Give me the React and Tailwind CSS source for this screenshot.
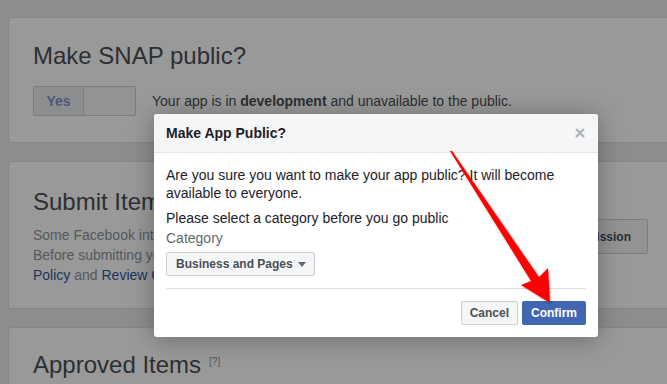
import React from 'react';

const Card = ({ className = '', children }) => (
  <div className={`bg-white border border-[#dddfe2] rounded-[3px] px-6 ${className}`}>{children}</div>
);

const BackgroundPage = () => (
  <div className="w-[673px] pl-2 pt-[17px] flex flex-col gap-[18px]">
    {/* Make public */}
    <Card className="pt-6 pb-[26px]">
      <h1 className="text-[24px] leading-[28px] text-[#4b4f56]">Make SNAP public?</h1>
      <div className="mt-4 flex items-center gap-4">
        <div className="flex h-[30px] border border-[#ccd0d5] rounded-[2px] overflow-hidden">
          <div className="w-[50px] bg-[#ebedf0] border-r border-[#ccd0d5] flex items-center justify-center text-[14px] font-bold text-[#7f95c9]">
            Yes
          </div>
          <div className="w-[51px] bg-[#f5f6f7]" />
        </div>
        <p className="text-[14px] text-[#4b4f56]">
          Your app is in <span className="font-bold">development</span> and unavailable to the public.
        </p>
      </div>
    </Card>

    {/* Submit items */}
    <Card className="pt-[26px] pb-[23px]">
      <div className="flex items-center justify-between">
        <div>
          <h2 className="text-[24px] leading-[28px] text-[#4b4f56]">Submit Items for Approval</h2>
          <div className="mt-[9px] text-[14px] leading-[20px] text-[#90949c]">
            <div>Some Facebook integrations require approval before public usage.</div>
            <div>Before submitting your app for review, please consult our Platform</div>
            <div>
              <span className="text-[#365899]">Policy</span> and{' '}
              <span className="text-[#365899]">Review Guidelines</span>.
            </div>
          </div>
        </div>
        <button className="shrink-0 h-[35px] px-4 bg-[#f5f6f7] border border-[#ccd0d5] rounded-[2px] text-[12px] font-bold text-[#4b4f56]">
          Start a Submission
        </button>
      </div>
    </Card>

    {/* Approved items */}
    <Card className="pt-[23px] h-[120px]">
      <h2 className="text-[24px] leading-[28px] text-[#4b4f56] flex items-start">
        Approved Items
        <span className="ml-2 mt-[5px] text-[10px] leading-[12px] text-[#90949c]">[?]</span>
      </h2>
    </Card>
  </div>
);

const Modal = () => (
  <div className="absolute left-[154px] top-[114px] w-[444px] bg-white rounded-[3px] shadow-[0_2px_26px_rgba(0,0,0,0.3)] overflow-hidden">
    <div className="h-[39px] px-3 bg-[#f5f6f7] border-b border-[#e5e5e5] flex items-center justify-between">
      <span className="text-[14px] font-bold text-[#1d2129]">Make App Public?</span>
      <svg width="10" height="10" viewBox="0 0 10 10" className="mr-[1px]">
        <path d="M1 1L9 9M9 1L1 9" stroke="#b0b3b8" strokeWidth="2.4" />
      </svg>
    </div>
    <div className="px-3 pt-[13px] pb-3">
      <p className="text-[14px] leading-[18px] text-[#1d2129]">
        Are you sure you want to make your app public? It will become available to everyone.
      </p>
      <p className="mt-[7px] text-[14px] leading-[18px] text-[#1d2129]">
        Please select a category before you go public
      </p>
      <div className="mt-[2px] text-[14px] leading-[18px] text-[#606770]">Category</div>
      <button className="mt-[5px] h-[24px] pl-[9px] pr-[8px] flex items-center gap-[5px] bg-[#f5f6f7] border border-[#ccd0d5] rounded-[2px] text-[12px] font-bold text-[#4b4f56]">
        Business and Pages
        <svg width="8" height="5" viewBox="0 0 8 5">
          <path d="M0 0H8L4 5Z" fill="#606770" />
        </svg>
      </button>
      <div className="mt-3 pt-3 border-t border-[#dddfe2] flex justify-end gap-1">
        <button className="h-[24px] px-2 bg-[#f5f6f7] border border-[#ccd0d5] rounded-[2px] text-[12px] font-bold text-[#4b4f56]">
          Cancel
        </button>
        <button className="h-[24px] px-2 bg-[#4267b2] border border-[#4267b2] rounded-[2px] text-[12px] font-bold text-white">
          Confirm
        </button>
      </div>
    </div>
  </div>
);

export default function App() {
  return (
    <div className="relative w-[667px] h-[384px] overflow-hidden bg-[#e9ebee] font-['Liberation_Sans',Arial,sans-serif]">
      <BackgroundPage />
      <div className="absolute inset-0 bg-black/40" />
      <Modal />
      {/* red annotation arrow */}
      <svg
        className="absolute inset-0 pointer-events-none drop-shadow-[1px_1px_1px_rgba(0,0,0,0.35)]"
        width="667"
        height="384"
        viewBox="0 0 667 384"
      >
        <polygon points="450,151 452,151 539,277 548,268 550,303 521,285 531,281" fill="#ff0000" />
      </svg>
    </div>
  );
}
